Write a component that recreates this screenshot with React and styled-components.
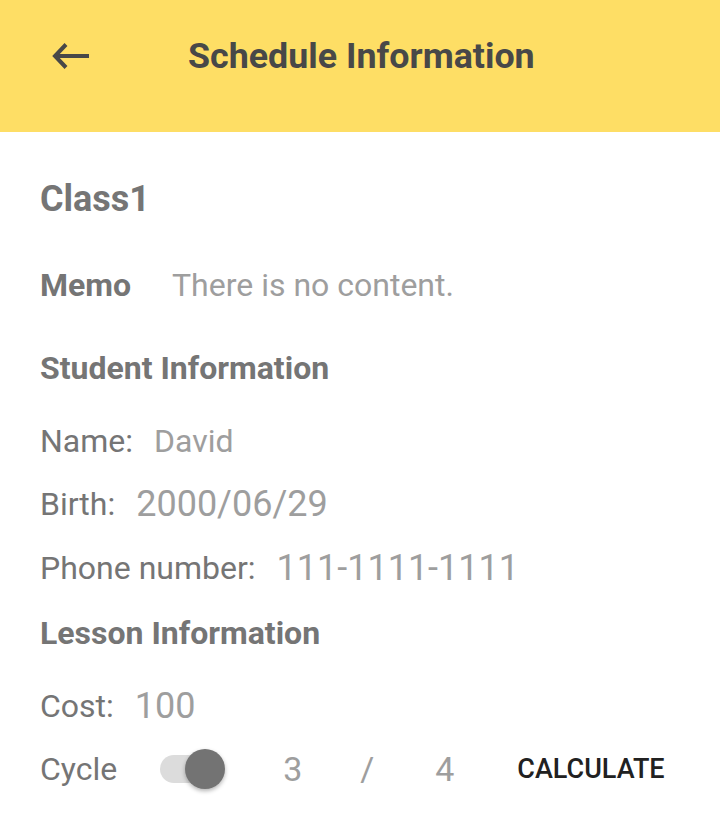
import React, { useState } from 'react';
import styled, { createGlobalStyle } from 'styled-components';

const GlobalStyle = createGlobalStyle`
  body {
    margin: 0;
    background: #fff;
    font-family: Roboto, "Noto Sans", Arial, sans-serif;
  }
`;

const App = () => {
  const [cycleOn, setCycleOn] = useState(true);

  return (
    <Page>
      <GlobalStyle />
      <Header>
        <BackButton aria-label="back">
          <svg width="38" height="28" viewBox="0 0 38 28" fill="none">
            <path d="M3 14H37" stroke="#484848" strokeWidth="4" />
            <path d="M14 2.5L3 14l11 11.5" stroke="#484848" strokeWidth="4" strokeLinejoin="miter" />
          </svg>
        </BackButton>
        <Title>Schedule Information</Title>
      </Header>

      <Content>
        <ClassName>Class1</ClassName>

        <Row top={46}>
          <MemoLabel>Memo</MemoLabel>
          <MemoText>There is no content.</MemoText>
        </Row>

        <Section top={43}>Student Information</Section>

        <Row top={33}>
          <Label>Name:</Label>
          <Value>David</Value>
        </Row>
        <Row top={23}>
          <Label>Birth:</Label>
          <Value big>2000/06/29</Value>
        </Row>
        <Row top={24}>
          <Label>Phone number:</Label>
          <Value big>111-1111-1111</Value>
        </Row>

        <Section top={25}>Lesson Information</Section>

        <Row top={33}>
          <Label>Cost:</Label>
          <Value big>100</Value>
        </Row>

        <Row top={23}>
          <Label>Cycle</Label>
          <Switch onClick={() => setCycleOn(!cycleOn)}>
            <Track />
            <Thumb on={cycleOn ? 1 : 0} />
          </Switch>
          <Count gap={58}>3</Count>
          <Count gap={57} narrow>/</Count>
          <Count gap={62}>4</Count>
          <CalcButton type="button">CALCULATE</CalcButton>
        </Row>
      </Content>
    </Page>
  );
};

export default App;

/* styles */
const Page = styled.div`
  width: 720px;
  min-height: 820px;
  background: #fff;
`;

const Header = styled.header`
  height: 132px;
  background: #fede65;
  display: flex;
  align-items: center;
  padding: 0 0 20px 52px;
  box-sizing: border-box;
`;

const BackButton = styled.button`
  width: 40px;
  height: 40px;
  border: none;
  background: none;
  padding: 0;
  display: flex;
  align-items: center;
  justify-content: flex-start;
  cursor: pointer;
`;

const Title = styled.h1`
  margin: 0 0 0 96px;
  font-size: 35.8px;
  font-weight: 700;
  color: #484848;
  white-space: nowrap;
`;

const Content = styled.main`
  padding: 47px 40px 0 40px;
  display: flex;
  flex-direction: column;
`;

const ClassName = styled.h2`
  margin: 0;
  height: 40px;
  line-height: 40px;
  font-size: 36px;
  font-weight: 700;
  color: #757575;
`;

const Row = styled.div`
  display: flex;
  align-items: center;
  height: 40px;
  margin-top: ${(p) => p.top}px;
`;

const MemoLabel = styled.span`
  font-size: 32px;
  font-weight: 700;
  color: #757575;
  width: 132px;
`;

const MemoText = styled.span`
  font-size: 32px;
  color: #9e9e9e;
`;

const Section = styled.h3`
  margin: ${(p) => p.top}px 0 0 0;
  height: 40px;
  line-height: 40px;
  font-size: 32px;
  font-weight: 700;
  color: #757575;
  white-space: nowrap;
`;

const Label = styled.span`
  font-size: 32px;
  color: #757575;
  white-space: nowrap;
`;

const Value = styled.span`
  margin-left: 21px;
  font-size: ${(p) => (p.big ? 36 : 32)}px;
  color: #9e9e9e;
  white-space: nowrap;
`;

const Switch = styled.div`
  position: relative;
  width: 65px;
  height: 40px;
  margin-left: 43px;
  cursor: pointer;
`;

const Track = styled.div`
  position: absolute;
  left: 0;
  top: 6px;
  width: 56px;
  height: 28px;
  border-radius: 14px;
  background: #dcdcdc;
`;

const Thumb = styled.div`
  position: absolute;
  top: 0;
  left: ${(p) => (p.on ? 25 : 0)}px;
  width: 40px;
  height: 40px;
  border-radius: 50%;
  background: #737373;
  box-shadow: 0 2px 4px rgba(0, 0, 0, 0.3);
`;

const Count = styled.span`
  display: inline-block;
  width: ${(p) => (p.narrow ? 13 : 20)}px;
  margin-left: ${(p) => p.gap}px;
  font-size: 34px;
  color: #9e9e9e;
`;

const CalcButton = styled.button`
  margin-left: 62px;
  border: none;
  background: none;
  padding: 0;
  font-family: Roboto, Arial, sans-serif;
  font-size: 27px;
  font-weight: 500;
  color: #212121;
  white-space: nowrap;
  cursor: pointer;
`;
